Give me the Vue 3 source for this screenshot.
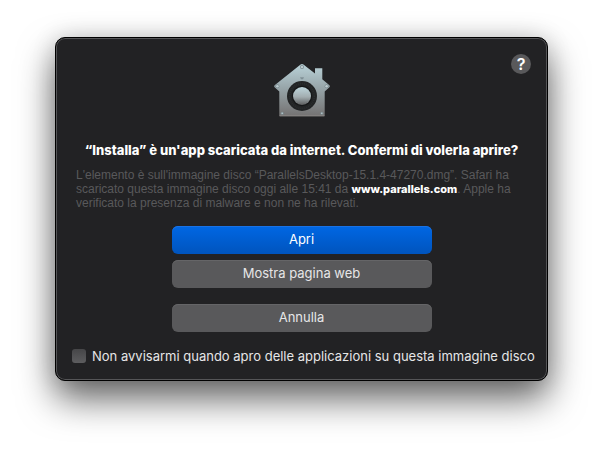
<template>
  <main class="desktop">
    <section class="dialog" role="alertdialog" aria-labelledby="dialog-title" aria-describedby="dialog-text">
      <button class="help" type="button" aria-label="Aiuto">?</button>

      <svg class="house" viewBox="0 0 60 56" aria-hidden="true">
        <defs>
          <linearGradient id="metal" x1="0" y1="0" x2="0" y2="1">
            <stop offset="0" stop-color="#b9d2d8" />
            <stop offset="0.45" stop-color="#98a6aa" />
            <stop offset="1" stop-color="#747272" />
          </linearGradient>
          <linearGradient id="knob" x1="0" y1="0" x2="0" y2="1">
            <stop offset="0" stop-color="#bdd5db" />
            <stop offset="0.55" stop-color="#a2adb0" />
            <stop offset="1" stop-color="#5c5d5e" />
          </linearGradient>
        </defs>
        <path d="M28.6 2.6Q30 1.6 31.4 2.6L43 11.5V6.2H50.3V17.2L57.4 23.2Q58.4 24.2 57.4 25.2L52.7 29.6V53.5Q52.7 54.2 52 54.2H8Q7.3 54.2 7.3 53.5V29.6L2.6 25.2Q1.6 24.2 2.6 23.2Z" fill="url(#metal)" />
        <path d="M7.5 53.8H52.5" stroke="#8e8a89" stroke-width="0.8" />
        <path d="M28 15.3H32L31 17.3H29Z" fill="#7f9096" />
        <circle cx="30" cy="34" r="15" fill="#222425" />
        <circle cx="30" cy="34" r="12.4" fill="none" stroke="#2b2e2f" stroke-width="1.6" stroke-dasharray="1 1" />
        <circle cx="30" cy="34" r="10.2" fill="#151718" />
        <circle cx="30" cy="34" r="9" fill="url(#knob)" />
        <g v-for="(s, i) in screws" :key="i">
          <circle :cx="s.x" :cy="s.y" :r="s.r" fill="#798a8f" />
          <circle :cx="s.x" :cy="s.y" :r="s.r - 0.7" fill="#bdcbcf" />
        </g>
      </svg>

      <h1 id="dialog-title" class="title">“Installa” è un'app scaricata da internet. Confermi di volerla aprire?</h1>
      <p id="dialog-text" class="message">
        L'elemento è sull'immagine disco “ParallelsDesktop-15.1.4-47270.dmg”. Safari ha
        scaricato questa immagine disco oggi alle 15:41 da <strong>www.parallels.com</strong>. Apple ha
        verificato la presenza di malware e non ne ha rilevati.
      </p>

      <div class="actions">
        <button class="action action--primary" type="button">Apri</button>
        <button class="action" type="button">Mostra pagina web</button>
        <button class="action action--cancel" type="button">Annulla</button>
      </div>

      <label class="option">
        <input v-model="skipWarning" class="option__box" type="checkbox" />
        <span>Non avvisarmi quando apro delle applicazioni su questa immagine disco</span>
      </label>
    </section>
  </main>
</template>

<script setup>
import { ref } from 'vue'

const skipWarning = ref(false)

const screws = [
  { x: 30, y: 5, r: 2 },
  { x: 5.4, y: 24.3, r: 2 },
  { x: 54.6, y: 24.3, r: 2 },
  { x: 10.2, y: 51.2, r: 1.5 },
  { x: 49.8, y: 51.2, r: 1.5 },
]
</script>

<style>
body {
  background: #fff;
}
</style>

<style scoped>
.desktop {
  padding: 37px 55px 73px;
  font-family: Inter, 'Liberation Sans', sans-serif;
  overflow: hidden;
}

.dialog {
  position: relative;
  display: flex;
  flex-direction: column;
  align-items: center;
  padding: 24px 16px 16px;
  border: 1px solid #000;
  border-radius: 10px;
  background: #222224;
  box-shadow: inset 0 0 0 1px #555557, 0 18px 36px rgba(0, 0, 0, 0.6), 0 0 24px rgba(0, 0, 0, 0.14);
}

.help {
  position: absolute;
  top: 16px;
  right: 16px;
  width: 20px;
  height: 20px;
  padding: 0;
  border: 0;
  border-radius: 50%;
  background: #59595b;
  color: #fff;
  font: 600 16px/20px Inter, sans-serif;
  text-align: center;
}

.house {
  width: 60px;
  height: 56px;
}

.title {
  margin: 24px 0 0;
  color: #fff;
  font-size: 13px;
  font-weight: 800;
  line-height: 16px;
  text-align: center;
}

.message {
  align-self: stretch;
  margin: 10px 4px 0;
  color: #59595b;
  font: 12px/14px 'Liberation Sans', Arial, sans-serif;
}

.message strong {
  color: #fff;
  font-family: Inter, sans-serif;
  font-size: 11px;
  font-weight: 800;
  line-height: 12px;
}

.actions {
  display: flex;
  flex-direction: column;
  gap: 6px;
  width: 260px;
  max-width: 100%;
  margin-top: 16px;
}

.action {
  height: 28px;
  padding: 0 12px 2px;
  border: 0;
  border-radius: 6px;
  background: #59595b;
  box-shadow: inset 0 1px #656567;
  color: #e6e6e7;
  font: 13px/16px Inter, sans-serif;
}

.action--primary {
  background: linear-gradient(#0067e4, #0054bd);
  box-shadow: inset 0 1px #1a72e4;
  color: #fff;
}

.action--cancel {
  margin-top: 10px;
}

.option {
  display: flex;
  align-items: center;
  align-self: stretch;
  gap: 6px;
  margin-top: 16px;
  color: #e6e6e7;
  font-size: 13px;
  line-height: 16px;
  white-space: nowrap;
}

.option__box {
  appearance: none;
  flex: none;
  width: 14px;
  height: 14px;
  margin: 0;
  border-radius: 3px;
  background: linear-gradient(#464648, #5d5d5f);
}

.option__box:checked {
  background: #0060d5;
}
</style>
